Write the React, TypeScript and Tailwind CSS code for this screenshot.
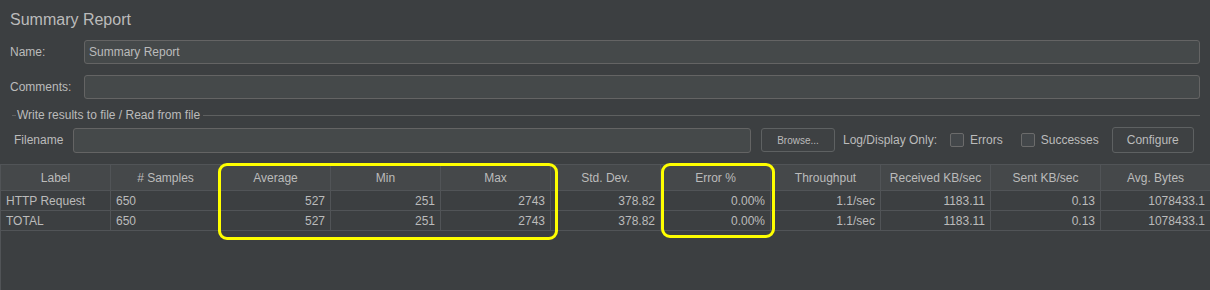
import type { ReactNode } from 'react';

const HEADERS = [
  'Label',
  '# Samples',
  'Average',
  'Min',
  'Max',
  'Std. Dev.',
  'Error %',
  'Throughput',
  'Received KB/sec',
  'Sent KB/sec',
  'Avg. Bytes',
];

const ROWS = [
  ['HTTP Request', '650', '527', '251', '2743', '378.82', '0.00%', '1.1/sec', '1183.11', '0.13', '1078433.1'],
  ['TOTAL', '650', '527', '251', '2743', '378.82', '0.00%', '1.1/sec', '1183.11', '0.13', '1078433.1'],
];

function TextField({ className }: { className: string }) {
  return <div className={`h-full rounded-[3px] border border-[#646464] bg-[#45494a] ${className}`} />;
}

function Checkbox({ label }: { label: string }) {
  return (
    <div className="flex items-center">
      <div className="h-[14px] w-[14px] rounded-[2px] border border-[#6b6b6b] bg-[#43474a]" />
      <span className="ml-[6px]">{label}</span>
    </div>
  );
}

function Button({ children, className }: { children: ReactNode; className: string }) {
  return (
    <div className={`flex items-center justify-center rounded-[3px] border border-[#5e6162] bg-[#3e4143] ${className}`}>
      {children}
    </div>
  );
}

export default function App() {
  return (
    <div
      className="flex h-[290px] w-[1210px] flex-col overflow-hidden bg-[#3c3f41] text-[12px] text-[#bbbbbb]"
      style={{ fontFamily: '"Liberation Sans", Arial, sans-serif' }}
    >
      <div className="mt-[10px] h-[20px] pl-[10px] text-[16px] leading-[20px]">Summary Report</div>

      <div className="mt-[10px] flex h-[24px] items-center pr-[10px]">
        <span className="w-[84px] pl-[10px]">Name:</span>
        <div className="flex h-full flex-1 items-center rounded-[3px] border border-[#646464] bg-[#45494a] pl-[4px] text-[#bbbbbb]">
          Summary Report
        </div>
      </div>

      <div className="mt-[11px] flex h-[24px] items-center pr-[10px]">
        <span className="w-[84px] pl-[10px]">Comments:</span>
        <TextField className="flex-1" />
      </div>

      <div className="mt-[9px] flex h-[14px] items-center pl-[12px] pr-[10px]">
        <div className="h-px w-[4px] bg-[#5e6060]" />
        <span className="px-[1px]">Write results to file / Read from file</span>
        <div className="ml-[2px] h-px flex-1 bg-[#5e6060]" />
      </div>

      <div className="mt-[5px] flex h-[26px] items-center">
        <span className="w-[73px] pl-[14px]">Filename</span>
        <div className="h-[25px] w-[678px]">
          <TextField className="w-full" />
        </div>
        <Button className="ml-[10px] h-[24px] w-[74px] text-[10px]">Browse...</Button>
        <span className="ml-[8px]">Log/Display Only:</span>
        <div className="ml-[13px]">
          <Checkbox label="Errors" />
        </div>
        <div className="ml-[18px]">
          <Checkbox label="Successes" />
        </div>
        <Button className="ml-[13px] h-[26px] w-[82px]">Configure</Button>
      </div>

      <div className="relative mt-[11px] flex-1 border-l border-t border-[#515457]">
        <div className="grid grid-cols-[repeat(11,110px)]">
          {HEADERS.map((h) => (
            <div
              key={h}
              className="flex h-[26px] items-center justify-center border-b border-r border-[#515457] bg-[#45484a]"
            >
              {h}
            </div>
          ))}
          {ROWS.map((row, r) =>
            row.map((cell, c) => (
              <div
                key={`${r}-${c}`}
                className={`flex h-[20px] items-center border-b border-r border-[#515457] ${
                  c < 2 ? 'justify-start pl-[5px]' : 'justify-end pr-[5px]'
                }`}
              >
                {cell}
              </div>
            ))
          )}
        </div>

        <div className="pointer-events-none absolute left-[217px] top-[-2px] h-[77px] w-[340px] rounded-[9px] border-[3px] border-[#ffff00]" />
        <div className="pointer-events-none absolute left-[660px] top-[-2px] h-[75px] w-[114px] rounded-[9px] border-[3px] border-[#ffff00]" />
      </div>
    </div>
  );
}
